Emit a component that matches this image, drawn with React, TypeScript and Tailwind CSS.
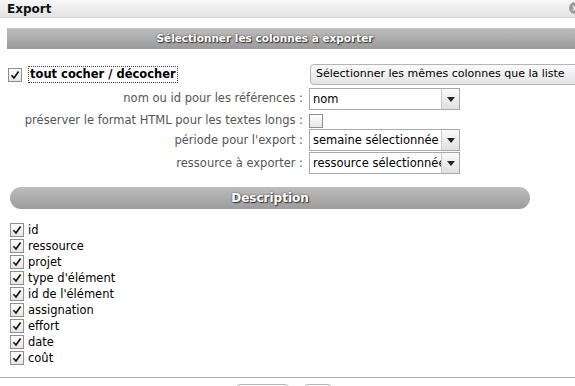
import React from "react";

const font = { fontFamily: '"DejaVu Sans", Verdana, sans-serif' };

function Check({ checked = true }: { checked?: boolean }) {
  return (
    <span className="inline-flex h-[14px] w-[14px] shrink-0 items-center justify-center border border-[#8f8f8f] bg-gradient-to-b from-[#ffffff] to-[#e6e6e6]">
      {checked && (
        <svg width="10" height="10" viewBox="0 0 10 10">
          <path d="M1.5 5.2 L4 8 L8.6 1.6" fill="none" stroke="#111" strokeWidth="1.7" />
        </svg>
      )}
    </span>
  );
}

function Select({ value }: { value: string }) {
  return (
    <div className="flex h-[22px] w-[151px] border border-[#a9a9a9] bg-white">
      <div className="flex-1 overflow-hidden whitespace-nowrap pl-[3px] pt-[2px] text-[11.5px] text-black">{value}</div>
      <div className="flex w-[18px] items-center justify-center border-l border-[#c8c8c8] bg-gradient-to-b from-[#fafafa] to-[#e0e0e0]">
        <svg width="8" height="5" viewBox="0 0 8 5"><path d="M0 0 H8 L4 5 Z" fill="#222" /></svg>
      </div>
    </div>
  );
}

const items = ["id", "ressource", "projet", "type d'élément", "id de l'élément", "assignation", "effort", "date", "coût"];

export default function App() {
  return (
    <div className="relative h-[386px] w-[575px] overflow-hidden bg-white" style={font}>
      <div className="flex h-[18px] items-center border-b border-[#d2d2d2] bg-gradient-to-b from-[#f7f7f7] to-[#e3e3e3] pl-[7px]">
        <span className="text-[12px] font-bold text-[#111]">Export</span>
      </div>
      <div className="absolute right-[-6px] top-[2px] flex h-[12px] w-[12px] items-center justify-center rounded-full bg-[#9a9a9a] text-[9px] font-bold leading-none text-white">×</div>

      <div className="ml-[7px] mt-[10px] h-[21px] w-[600px] border-t border-[#c4c4c4] bg-gradient-to-b from-[#bcbcbc] to-[#9a9a9a]">
        <div className="w-[516px] pt-[2px] text-center text-[10.5px] font-bold text-white" style={{ textShadow: "0 0 2px #444, 1px 1px 1px #333" }}>
          Sélectionner les colonnes à exporter
        </div>
      </div>

      <div className="mt-[15px] flex items-center">
        <div className="ml-[8px] flex w-[302px] shrink-0 items-center gap-[6px]">
          <Check />
          <span className="whitespace-nowrap border border-dotted border-[#444] px-[1px] text-[11.5px] font-bold leading-[15px] text-black">tout cocher / décocher</span>
        </div>
        <div className="flex h-[21px] w-[280px] shrink-0 items-center rounded-[4px] border border-[#b5b5b5] bg-gradient-to-b from-[#fbfbfb] to-[#e4e4e4] pl-[5px] text-[11px] whitespace-nowrap text-black">
          Sélectionner les mêmes colonnes que la liste
        </div>
      </div>

      <div className="mt-[3px] grid grid-cols-[303px_auto] items-center gap-x-[6px] text-[11.5px] text-[#555]">
        <div className="text-right whitespace-nowrap">nom ou id pour les références :</div>
        <Select value="nom" />
        <div className="mt-[2px] text-right whitespace-nowrap">préserver le format HTML pour les textes longs :</div>
        <div className="mt-[2px] h-[14px] w-[14px] border border-[#8f8f8f] bg-gradient-to-b from-white to-[#e6e6e6]" />
        <div className="text-right whitespace-nowrap">période pour l'export :</div>
        <div><Select value="semaine sélectionnée" /></div>
        <div className="mt-[1px] text-right whitespace-nowrap">ressource à exporter :</div>
        <div className="mt-[1px]"><Select value="ressource sélectionnée" /></div>
      </div>

      <div className="ml-[10px] mt-[13px] flex h-[22px] w-[520px] items-center justify-center rounded-full bg-gradient-to-b from-[#bdbdbd] to-[#9c9c9c]">
        <span className="text-[12px] font-bold text-white" style={{ textShadow: "0 0 2px #444, 1px 1px 1px #333" }}>Description</span>
      </div>

      <div className="ml-[10px] mt-[13px] flex flex-col">
        {items.map((t) => (
          <div key={t} className="flex h-[16px] items-center gap-[4px]">
            <Check />
            <span className="text-[11.5px] text-black">{t}</span>
          </div>
        ))}
      </div>

      <div className="mt-[11px] h-[2px] border-t border-[#a8a8a8]" />
      <div className="mt-[5px] flex gap-[15px] pl-[236px]">
        <div className="h-[20px] w-[53px] rounded-[4px] border border-[#b5b5b5]" />
        <div className="h-[20px] w-[28px] rounded-[4px] border border-[#b5b5b5]" />
      </div>
    </div>
  );
}
